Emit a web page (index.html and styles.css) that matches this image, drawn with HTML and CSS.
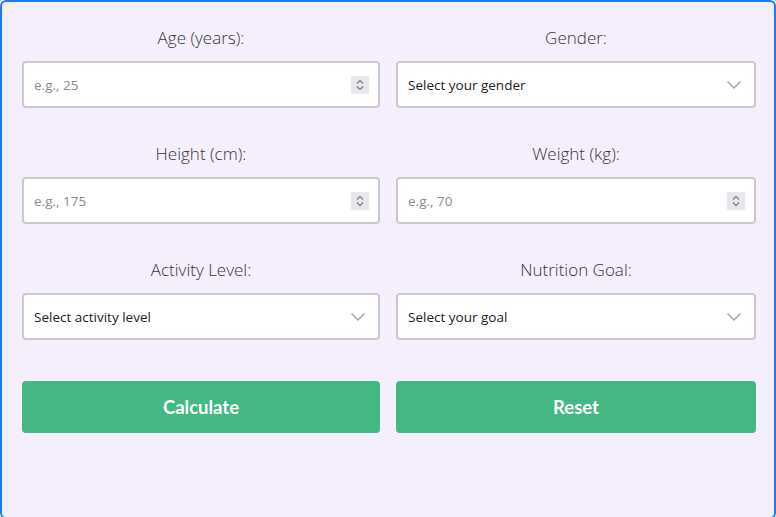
FILE: index.html
```html
<!DOCTYPE html>
<html lang="en">
<head>
<meta charset="utf-8">
<title>Nutrition Calculator</title>
<link rel="stylesheet" href="styles.css">
</head>
<body>
<div class="card">
  <form class="grid">
    <div class="field">
      <label class="label" for="age">Age (years):</label>
      <div class="box">
        <input class="control" id="age" type="text" placeholder="e.g., 25">
        <span class="spin"><svg width="10" height="14" viewBox="0 0 10 14"><path d="M2 5.5 L5 2.5 L8 5.5 M2 8.5 L5 11.5 L8 8.5" fill="none" stroke="#7a7a80" stroke-width="1.2"/></svg></span>
      </div>
    </div>
    <div class="field">
      <label class="label" for="gender">Gender:</label>
      <div class="box">
        <select class="control sel" id="gender"><option>Select your gender</option></select>
        <svg class="chev" width="16" height="10" viewBox="0 0 16 10"><path d="M1.5 1.5 L8 8 L14.5 1.5" fill="none" stroke="#a8a8ae" stroke-width="1.5"/></svg>
      </div>
    </div>
    <div class="field">
      <label class="label" for="height">Height (cm):</label>
      <div class="box">
        <input class="control" id="height" type="text" placeholder="e.g., 175">
        <span class="spin"><svg width="10" height="14" viewBox="0 0 10 14"><path d="M2 5.5 L5 2.5 L8 5.5 M2 8.5 L5 11.5 L8 8.5" fill="none" stroke="#7a7a80" stroke-width="1.2"/></svg></span>
      </div>
    </div>
    <div class="field">
      <label class="label" for="weight">Weight (kg):</label>
      <div class="box">
        <input class="control" id="weight" type="text" placeholder="e.g., 70">
        <span class="spin"><svg width="10" height="14" viewBox="0 0 10 14"><path d="M2 5.5 L5 2.5 L8 5.5 M2 8.5 L5 11.5 L8 8.5" fill="none" stroke="#7a7a80" stroke-width="1.2"/></svg></span>
      </div>
    </div>
    <div class="field">
      <label class="label" for="activity">Activity Level:</label>
      <div class="box">
        <select class="control sel" id="activity"><option>Select activity level</option></select>
        <svg class="chev" width="16" height="10" viewBox="0 0 16 10"><path d="M1.5 1.5 L8 8 L14.5 1.5" fill="none" stroke="#a8a8ae" stroke-width="1.5"/></svg>
      </div>
    </div>
    <div class="field">
      <label class="label" for="goal">Nutrition Goal:</label>
      <div class="box">
        <select class="control sel" id="goal"><option>Select your goal</option></select>
        <svg class="chev" width="16" height="10" viewBox="0 0 16 10"><path d="M1.5 1.5 L8 8 L14.5 1.5" fill="none" stroke="#a8a8ae" stroke-width="1.5"/></svg>
      </div>
    </div>
    <div class="actions">
      <button class="btn" type="button">Calculate</button>
      <button class="btn" type="reset">Reset</button>
    </div>
  </form>
</div>
</body>
</html>
```
FILE: styles.css
```css
* { box-sizing: border-box; }
html, body { margin: 0; padding: 0; }
body { width: 776px; height: 517px; overflow: hidden; background: #ffffff; }
.card {
  width: 776px;
  height: 519px;
  border: 2px solid #1c7cf0;
  border-radius: 6px;
  background: #f4eefd;
  padding: 23px 19px 20px 20px;
  font-family: "Open Sans", "Noto Sans", sans-serif;
}
.grid {
  display: grid;
  grid-template-columns: 358px 360px;
  column-gap: 16px;
  row-gap: 33px;
}
.field { display: flex; flex-direction: column; }
.label {
  display: block;
  text-align: center;
  font-size: 17px;
  font-weight: 300;
  line-height: 25px;
  color: #36363b;
  margin-bottom: 11px;
}
.box {
  display: flex;
  align-items: center;
  height: 47px;
  background: #ffffff;
  border: 2px solid #cbc9ce;
  border-radius: 4px;
  padding: 0 10px 0 10px;
}
.control {
  flex: 1;
  min-width: 0;
  border: none;
  outline: none;
  background: transparent;
  font-family: "Open Sans", "Noto Sans", sans-serif;
  font-size: 13.5px;
  color: #222226;
  padding: 0;
  height: 100%;
}
.control::placeholder { color: #8a8a92; }
.sel {
  appearance: none;
  -webkit-appearance: none;
  cursor: pointer;
}
.spin {
  display: flex;
  align-items: center;
  justify-content: center;
  width: 18px;
  height: 18px;
  background: #e8e7ec;
  margin-right: -1px;
}
.chev { margin-right: 2px; }
.actions {
  grid-column: 1 / -1;
  display: grid;
  grid-template-columns: 358px 360px;
  column-gap: 16px;
  margin-top: 8px;
}
.btn {
  height: 52px;
  border: none;
  border-radius: 4px;
  background: #43b883;
  color: #ffffff;
  font-family: Lato, "Open Sans", sans-serif;
  font-weight: 700;
  font-size: 18.5px;
  cursor: pointer;
}
```
